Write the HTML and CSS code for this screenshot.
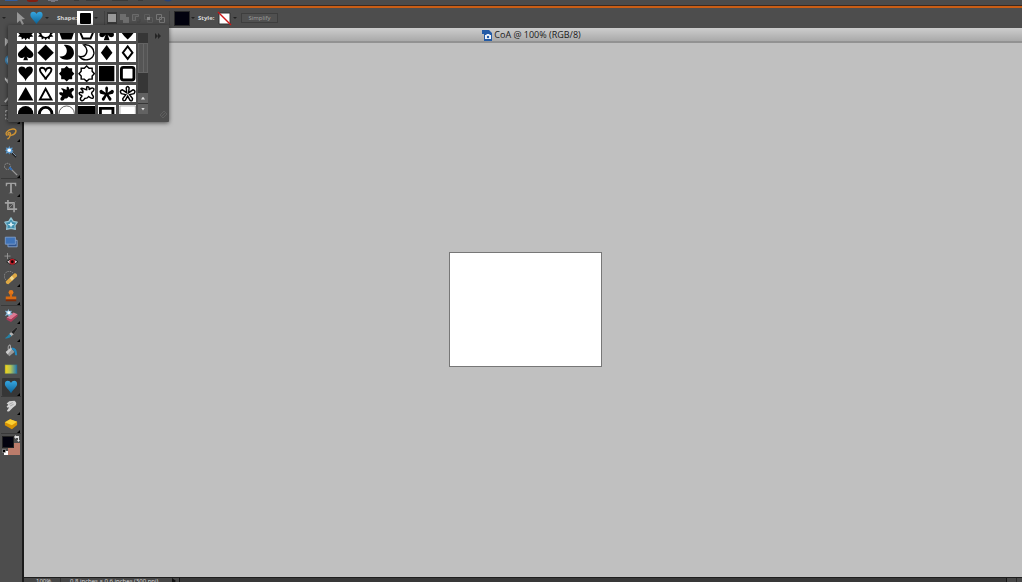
FILE: index.html
```html
<!DOCTYPE html>
<html lang="en">
<head>
<meta charset="utf-8">
<title>CoA @ 100% (RGB/8)</title>
<link rel="stylesheet" href="styles.css">
</head>
<body>
<svg class="defs" aria-hidden="true">
  <defs>
    <linearGradient id="blue" x1="0" y1="0" x2="0" y2="1"><stop offset="0" stop-color="#36a6e0"/><stop offset="1" stop-color="#0d6295"/></linearGradient>
    <linearGradient id="yb" x1="0" y1="0" x2="1" y2="0"><stop offset="0" stop-color="#f7d514"/><stop offset=".45" stop-color="#b9c552"/><stop offset="1" stop-color="#1874b8"/></linearGradient>
    <path id="heart" d="M9 16C7 12 2 9 2 5.500C2 1 7.500 1 9 4.500C10.500 1 16 1 16 5.500C16 9 11 12 9 16Z"/>
    <path id="longheart" d="M9 17C8 12 1.500 10 1.500 5C1.500 .5 7.500 .5 9 4C10.500 .5 16.500 .5 16.500 5C16.500 10 10 12 9 17Z"/>
    <path id="spade" d="M9 1C10 5 17 7 17 11C17 15 12 15.500 10 13L11.500 17H6.500L8 13C6 15.500 1 15 1 11C1 7 8 5 9 1Z"/>
    <path id="diamond" d="M9 .5L17.500 9L9 17.500L.5 9Z"/>
    <path id="moon" d="M6 1C13 0 17 5 16.500 10C15 18 5 18 1.500 13C9 14 12 6 6 1Z"/>
    <path id="burst" d="M9 1L11.500 3.300L14.700 3.300L14.700 6.500L17 9L14.700 11.500L14.700 14.700L11.500 14.700L9 17L6.500 14.700L3.300 14.700L3.300 11.500L1 9L3.300 6.500L3.300 3.300L6.500 3.300Z"/>
    <path id="splat" d="M9 2C11 1 12 3 11.500 5C14 2 18 3 16 6C13 8 14 9 16 12C16 15 14 14 11 12C10 14 9 14 7 14C5 18 1 16 3 13C5 11 4 11 2 10C0 8 2 7 5 8C6 6 4 5 3 4C4 2 7 5 9 5Z"/>
    <path id="flower" d="M8 8L7.500 3Q9 0 10.500 3L10 8L14.500 5Q18 6 15.500 9L11 10L14 14Q14 17.500 11.500 16L9 11.500L6.500 16Q3.500 17 4 14L7 10L2.500 9Q0 6 3.500 5Z"/>
    <path id="sun" d="M1 9L4 7L2 4L6 4L6 1L9 3L12 1L12 4L16 4L14 7L17 9L15 11L17 13L13.500 13.500L13 16L10.500 14.500L9 17L7.500 14.500L5 16L4.500 13.500L1 13L3 11Z"/>
  </defs>
</svg>

<div class="app">
  <div class="topstrip">
    <svg width="180" height="6" viewBox="0 0 180 6"><path d="M5 0h12l1 1H5z" fill="#315c9e"/><path d="M27 0h11v1l-2 1h-7l-2-1z" fill="#801f12"/><path d="M48 0h10v1h-3v1h-4V1h-3z" fill="#777782"/><path d="M74 0h5v1h-5zM86 0h14v1H86zM112 0h16v1h-16zM138 0h5v1h-5z" fill="#3b3b3b"/><path d="M164 0h8q-4 3-8 0z" fill="#26437b"/></svg>
  </div>

  <div class="options">
    <span class="caret"></span>
    <button class="plain pick" aria-label="Selection tool"><svg width="10" height="13" viewBox="0 0 10 13"><path d="M1 0L9 7L5.500 7.500L8 12L6 13L4 8.500L1 11Z" fill="#969696"/></svg></button>
    <button class="plain heartbtn" aria-label="Custom shape"><svg width="15" height="14" viewBox="1 1 16 16"><use href="#heart" fill="url(#blue)"/></svg></button>
    <span class="caret"></span>
    <span class="label shape-label">Shape:</span>
    <button class="swatch shape-swatch" aria-label="Shape picker"><span></span></button>
    <span class="caret boxed"></span>
    <span class="divider"></span>
    <div class="modes">
      <button class="plain mode on" aria-label="New shape"><svg width="8" height="8"><path d="M0 0h8v8H0z" fill="#999"/></svg></button>
      <button class="plain mode" aria-label="Add"><svg width="9" height="9"><path d="M0 0h6v3h3v6H3V6H0z" fill="#6e6e6e"/></svg></button>
      <button class="plain mode" aria-label="Subtract"><svg width="9" height="9"><path d="M.5.5h6v2h-3v4h-3z" fill="#565656" stroke="#6a6a6a"/><path d="M5 8h3V5" fill="none" stroke="#444"/></svg></button>
      <button class="plain mode" aria-label="Intersect"><svg width="9" height="9"><path d="M.5.5h5v5h-5zM3.500 3.500h5v5h-5z" fill="none" stroke="#5b5b5b"/><path d="M3 3h3v3H3z" fill="#888"/></svg></button>
      <button class="plain mode" aria-label="Exclude"><svg width="9" height="9"><path d="M.5.5h5v5h-5zM3.500 3.500h5v5h-5z" fill="none" stroke="#757575"/></svg></button>
    </div>
    <span class="divider"></span>
    <button class="color" aria-label="Colour"></button>
    <span class="caret boxed"></span>
    <span class="label style-label">Style:</span>
    <button class="plain nostyle" aria-label="No style"><svg width="15" height="15" viewBox="0 0 15 15"><path d="M2 2h11v11H2z" fill="#fff" stroke="#333"/><path d="M1 1L14 14" stroke="#cf1717" stroke-width="1.400"/></svg></button>
    <span class="caret boxed"></span>
    <button class="simplify">Simplify</button>
  </div>

  <div class="body">
    <nav class="tools" aria-label="Tools">
      <button class="tool" aria-label="Move"><svg viewBox="0 0 16 16"><path d="M1 3L8 8L4 9L1 13Z" fill="#aaa"/></svg></button>
      <button class="tool" aria-label="Zoom"><svg viewBox="0 0 16 16"><circle cx="7" cy="8" r="5" fill="#82b9dc" stroke="#397ba9" stroke-width="2"/></svg></button>
      <button class="tool" aria-label="Hand"><svg viewBox="0 0 16 16"><path d="M1 7L4 10L5 4H9V15H5L1 10Z" fill="#bbb"/></svg></button>
      <button class="tool" aria-label="Eyedropper"><svg viewBox="0 0 16 16"><path d="M1 15L7 8" stroke="#aaa" stroke-width="2"/></svg></button>
      <hr>
      <button class="tool more" aria-label="Marquee"><svg viewBox="0 0 16 16"><path d="M2 3h11v10H2z" fill="none" stroke="#bbb" stroke-dasharray="2"/></svg></button>
      <button class="tool more" aria-label="Lasso"><svg viewBox="0 0 16 16"><path d="M4 11C0 9 4 4 10 3.500C16 3 14 9 9 10.500C5 11.500 3 8 6 7.500C9 8 7 13 4 15" fill="none" stroke="#cf9434" stroke-width="1.600"/></svg></button>
      <button class="tool" aria-label="Magic wand"><svg viewBox="0 0 16 16"><path d="M7 8L14 15" stroke="#222" stroke-width="2.200"/><path d="M8 8L14 14" stroke="#819bb5" stroke-width="1"/><path d="M6 2L7 4.500L10 4L9 6.500L11 8L9 9L9 11L7 10L6 12L5 10L2 11L3 8L1 7L3 6L2 4L5 4.500Z" fill="#5b9dd4"/><circle cx="6" cy="7" r="2" fill="#fff"/></svg></button>
      <button class="tool more" aria-label="Quick selection"><svg viewBox="0 0 16 16"><circle cx="4" cy="5" r="3.500" fill="none" stroke="#999" stroke-dasharray="2 1"/><path d="M7 7L15 15" stroke="#999" stroke-width="1.600"/><path d="M6 6L9 9" stroke="#3470b9" stroke-width="2.200"/></svg></button>
      <hr>
      <button class="tool more" aria-label="Type"><svg viewBox="0 0 16 16"><path d="M2 2H14V6H13L12 3.500H9V13L11 14H5L7 13V3.500H4L3 6H2Z" fill="#a2a2a2"/></svg></button>
      <button class="tool" aria-label="Crop"><svg viewBox="0 0 16 16"><path d="M4.500 1V11.500H15M1 4.500H11.500V15" fill="none" stroke="#a2a2a2" stroke-width="1.900"/><path d="M5 11L13 3" stroke="#888"/></svg></button>
      <button class="tool" aria-label="Cookie cutter"><svg viewBox="0 0 16 16"><path d="M8 1L10.500 5L15 6L12.500 10L13 14L8 13L3 14L3.500 10L1 6L5.500 5Z" fill="#3f8ead" stroke="#93c2d2" stroke-width="1.500" stroke-linejoin="round"/><path d="M8 5L9.500 8L12 8L9 10L8 12L7 10L4 8L6.500 8Z" fill="#d6eef4"/></svg></button>
      <button class="tool" aria-label="Straighten"><svg viewBox="0 0 16 16"><path d="M4.500 6H15V13.500H4.500Z" fill="#2e528c" stroke="#8ba8d0"/><path d="M1.500 2.500H13V10.500H1.500Z" fill="#3f73b8" stroke="#7f9fce"/></svg></button>
      <button class="tool" aria-label="Red eye"><svg viewBox="0 0 16 16"><path d="M4 0V7M.5 3.500H7.500" stroke="#999"/><path d="M3 10Q9 4 16 10Q9 16 3 10Z" fill="#ddd" stroke="#111"/><circle cx="9.500" cy="10" r="3.300" fill="#b51c26"/><circle cx="9.500" cy="10" r="1.600" fill="#150505"/></svg></button>
      <button class="tool more" aria-label="Healing brush"><svg viewBox="0 0 16 16"><path d="M2 10A5 5 0 0 1 10 2" fill="none" stroke="#aaa" stroke-dasharray="1 1"/><path d="M2 12L12 2.500Q15 2 15 6L5 15Q2 15 2 12Z" fill="#dea945"/><path d="M6.500 8L9 5.500L11.500 8.500L9 11Z" fill="#f3d78c"/></svg></button>
      <button class="tool more" aria-label="Clone stamp"><svg viewBox="0 0 16 16"><circle cx="8" cy="4" r="2.800" fill="#e57919"/><path d="M6.800 5H9.200V8.500H14V12H2V8.500H6.800Z" fill="#d66a12"/><path d="M2 12H14V14H2Z" fill="#7b2909"/></svg></button>
      <hr>
      <button class="tool more" aria-label="Eraser"><svg viewBox="0 0 16 16"><path d="M3 11L11 5L15.500 7L8 13.500Z" fill="#dc7891"/><path d="M3 11L8 13V16L3 13.500ZM8 13L15.500 7V9.500L8 16Z" fill="#a93a58"/><path d="M5 1L6 3.500L9 3L8 5.500L10 7L7.500 8L6 10L4.500 8L1 9L3 6L1 3L4 3.500Z" fill="#8cbcdc"/><circle cx="5.500" cy="5.500" r="1.700" fill="#fff"/></svg></button>
      <button class="tool more" aria-label="Brush"><svg viewBox="0 0 16 16"><path d="M8 7L14 1.500L15.500 3L11 9.500Z" fill="#222" stroke="#777" stroke-width=".5"/><path d="M6 9L8 7L11 9.500L8 12Z" fill="#b5b5b5"/><path d="M6 9L8.500 11.500Q6 15 1 14Q4 12 6 9Z" fill="#2682a6"/></svg></button>
      <button class="tool" aria-label="Paint bucket"><svg viewBox="0 0 16 16"><path d="M2 9L8 4L12 9L6 14Z" fill="#999"/><path d="M2 9L8 4L9 6L4 12Z" fill="#ccc"/><path d="M5 7Q4 1 7 1L8 7" fill="none" stroke="#bbb"/><path d="M9 4Q15 4 15 12Q14 14 12.500 12Q13 8 9 6Z" fill="#2388be"/></svg></button>
      <button class="tool" aria-label="Gradient"><svg viewBox="0 0 16 16"><path d="M1 3H15V13.500H1Z" fill="url(#yb)" stroke="#44605d" stroke-width=".6"/></svg></button>
      <button class="tool more active" aria-label="Custom shape"><svg viewBox="1 1 16 16"><use href="#heart" fill="url(#blue)"/></svg></button>
      <hr>
      <button class="tool more" aria-label="Smudge"><svg viewBox="0 0 16 16"><path d="M3 5L6 2.500L12 2Q15 4 13.500 7L10 10L6 14Q3 15 3.500 13L6 9.500L4 10L3 8.500L5 6.500Z" fill="#d4d4d4"/><path d="M6 6L10 4M7 8L11 6" stroke="#888" stroke-width=".7"/></svg></button>
      <button class="tool more" aria-label="Sponge"><svg viewBox="0 0 16 16"><path d="M1 6L7 2.500L15 5.500V9L9 14L1 9.500Z" fill="#d89405"/><path d="M1 6L7 2.500L15 5.500L9 9.500Z" fill="#fbd034"/></svg></button>
      <hr>
      <div class="colors">
        <button class="bg" aria-label="Background colour"></button>
        <button class="fg" aria-label="Foreground colour"></button>
        <svg class="swap" width="6" height="7" viewBox="0 0 6 7"><path d="M0 2L2 0V1H5V5H6L4.500 7L3 5H4V3H2V4Z" fill="#ddd"/></svg>
        <svg class="reset" width="6" height="6" viewBox="0 0 6 6"><path d="M2 2h4v4H2z" fill="#fff"/><path d="M.5.5h3v3h-3z" fill="#000" stroke="#bbb" stroke-width=".5"/></svg>
      </div>
    </nav>

    <main class="document">
      <header class="titlebar">
        <svg width="10" height="11" viewBox="0 0 10 11"><path d="M0 0H7L10 3V11H2V4H0Z" fill="#245ba6"/><path d="M3 5H4L5 4H7L8 5H9V9H3Z" fill="#eef4fb"/><circle cx="6" cy="7" r="1.200" fill="#245ba6"/></svg>
        <span>CoA @ 100% (RGB/8)</span>
      </header>
      <div class="workspace"><div class="paper"></div></div>
      <footer class="status">
        <span class="zoom">100%</span>
        <span class="dims">0.8 inches × 0.6 inches (300 ppi)</span>
        <span class="next"></span>
        <span class="track"></span>
        <span class="end"></span>
      </footer>
    </main>

    <section class="picker" aria-label="Shapes">
      <div class="shapes">
        <div class="grid">
          <button><svg viewBox="0 0 18 18"><use href="#sun"/></svg></button>
          <button><svg viewBox="0 0 18 18"><use href="#sun"/><circle cx="9" cy="9" r="4.500" fill="#fff"/></svg></button>
          <button><svg viewBox="0 0 18 18"><path d="M9 1L17 8L14 16H4L1 8Z"/></svg></button>
          <button><svg viewBox="0 0 18 18"><path class="line" d="M9 2L16 8L13 15H5L2 8Z"/></svg></button>
          <button><svg viewBox="0 0 18 18"><path d="M8 11Q6 15 2 13Q0 9 5 7Q5 1 9 1Q13 1 13 7Q18 9 16 13Q12 15 10 11L12 17H6Z"/></svg></button>
          <button><svg viewBox="0 0 18 18"><path d="M1 5Q5 0 9 4Q13 0 17 5Q16 10 9 16Q2 10 1 5Z"/></svg></button>

          <button><svg viewBox="0 0 18 18"><use href="#spade"/></svg></button>
          <button><svg viewBox="0 0 18 18"><use href="#diamond"/></svg></button>
          <button><svg viewBox="0 0 18 18"><use href="#moon"/></svg></button>
          <button><svg viewBox="0 0 18 18"><use class="thin" href="#moon"/></svg></button>
          <button><svg viewBox="0 0 18 18"><path d="M9 1L15 9L9 17L3 9Z"/></svg></button>
          <button><svg viewBox="0 0 18 18"><path class="line" d="M9 2.500L14 9L9 15.500L4 9Z"/></svg></button>

          <button><svg viewBox="0 0 18 18"><use href="#longheart"/></svg></button>
          <button><svg viewBox="0 0 18 18"><path class="line" d="M9 15C8 11 3 9 3 5C3 2 7.500 2 9 5.500C10.500 2 15 2 15 5C15 9 10 11 9 15Z"/></svg></button>
          <button><svg viewBox="0 0 18 18"><use href="#burst"/></svg></button>
          <button><svg viewBox="0 0 18 18"><use class="thin" href="#burst"/></svg></button>
          <button><svg viewBox="0 0 18 18"><path d="M1 1H17V17H1Z"/></svg></button>
          <button><svg viewBox="0 0 18 18"><rect x="2.500" y="2.500" width="13" height="13" rx="2" fill="none" stroke="#000" stroke-width="3"/></svg></button>

          <button><svg viewBox="0 0 18 18"><path d="M9 2L17 16H1Z"/></svg></button>
          <button><svg viewBox="0 0 18 18"><path class="line" d="M9 4L15 15H3Z"/></svg></button>
          <button><svg viewBox="0 0 18 18"><use href="#splat"/></svg></button>
          <button><svg viewBox="0 0 18 18"><use class="thin" href="#splat"/></svg></button>
          <button><svg viewBox="0 0 18 18"><use href="#flower"/></svg></button>
          <button><svg viewBox="0 0 18 18"><use class="thin" href="#flower"/></svg></button>

          <button><svg viewBox="0 0 18 18"><circle cx="9" cy="9" r="8"/></svg></button>
          <button><svg viewBox="0 0 18 18"><circle cx="9" cy="9" r="6.500" fill="none" stroke="#000" stroke-width="3"/></svg></button>
          <button><svg viewBox="0 0 18 18"><circle cx="9" cy="9" r="8" fill="none" stroke="#333" stroke-width=".8"/></svg></button>
          <button><svg viewBox="0 0 18 18"><path d="M0 1H18V17H0Z"/></svg></button>
          <button><svg viewBox="0 0 18 18"><path d="M2.500 3.500H15.500V15H2.500Z" fill="none" stroke="#000" stroke-width="3"/></svg></button>
          <button><svg viewBox="0 0 18 18"><path d="M1 1H17V17H1Z" fill="none" stroke="#777" stroke-width=".6"/></svg></button>
        </div>
      </div>
      <div class="scroll">
        <span class="thumb"></span>
        <button class="up" aria-label="Scroll up"></button>
        <button class="down" aria-label="Scroll down"></button>
      </div>
      <div class="side">
        <svg width="6" height="6" viewBox="0 0 6 6"><path d="M0 0L3 3L0 6ZM3 0L6 3L3 6Z" fill="#252525"/></svg>
        <svg width="7" height="7" viewBox="0 0 7 7"><path d="M0 4L4 0L7 3L3 7ZM2 5L5 2" fill="none" stroke="#666" stroke-width=".7"/></svg>
      </div>
    </section>
  </div>
</div>
</body>
</html>
```
FILE: styles.css
```css
* { box-sizing: border-box; }
body { margin: 0; font-family: "Open Sans", "Noto Sans", sans-serif; background: #4d4d4d; }
button { padding: 0; margin: 0; border: 0; background: none; font: inherit; color: inherit; }
svg { display: block; flex: none; }
.defs { position: absolute; width: 0; height: 0; }
.app { display: flex; flex-direction: column; height: 100vh; overflow: hidden; }

.topstrip { flex: none; height: 6px; background: #4b4b4b; }
.options {
  flex: none; display: flex; align-items: center; height: 22px;
  padding-left: 2px; border-top: 2px solid #c95d14; background: #4d4d4d;
  box-shadow: 0 -1px #3a2a20;
}
.caret { flex: none; width: 4px; height: 2px; background: #222; clip-path: polygon(0 0, 100% 0, 50% 100%); }
.caret.boxed { margin: 0 2px 0 1px; }
.plain { display: grid; place-items: center; flex: none; }
.pick { margin-left: 10px; }
.heartbtn { margin: 0 1px 0 3px; }
.label { font-size: 6px; line-height: 8px; font-weight: 700; color: #d6d6d6; white-space: nowrap; }
.shape-label { width: 18px; margin: 0 2px 0 8px; }
.swatch { display: grid; place-items: center; width: 16px; height: 14px; background: #fff; }
.swatch span { width: 11px; height: 11px; border-radius: 1px; background: #000; }
.divider { flex: none; width: 1px; height: 14px; margin: 0 2px 0 4px; background: #414141; }
.modes { display: flex; gap: 2px; }
.mode { width: 10px; height: 12px; }
.mode.on { background: #383838; }
.color { width: 16px; height: 15px; margin-left: 2px; background: #02020e; border: 1px solid #292929; }
.style-label { width: 16px; margin: 0 3px 0 1px; }
.simplify {
  width: 37px; height: 10px; margin-left: 2px; border: 1px solid #3e3e3e;
  font-size: 6px; line-height: 8px; color: #a0a0a0; background: #505050;
}

.body { position: relative; flex: 1; min-height: 0; display: flex; }
.tools {
  flex: none; width: 24px; padding-top: 5px; overflow: hidden;
  background: #4d4d4d; border-right: 2px solid #1b1b1b;
}
.tools hr { height: 1px; margin: 0 1px; border: 0; background: #393939; }
.tool { position: relative; display: grid; place-items: center; width: 18px; height: 18px; margin-left: 2px; }
.tool svg { width: 14px; height: 14px; }
.tool.active { background: #363636; border-radius: 1px; }
.tool.more::after {
  content: ""; position: absolute; right: 0; bottom: 0; width: 3px; height: 3px;
  background: #000; clip-path: polygon(100% 0, 100% 100%, 0 100%);
}
.colors { position: relative; width: 20px; height: 22px; }
.fg, .bg { position: absolute; width: 12px; height: 12px; }
.fg { left: 2px; top: 2px; background: #02020e; border: 1px solid #222; }
.bg { right: 0; top: 9px; background: #bb7c6b; }
.swap { position: absolute; right: 0; top: 1px; }
.reset { position: absolute; left: 2px; bottom: 1px; }

.document { flex: 1; min-width: 0; display: flex; flex-direction: column; }
.titlebar {
  flex: none; display: flex; align-items: center; justify-content: center; gap: 2px;
  height: 15px; padding: 1px 0 0 17px; font-size: 9px; line-height: 12px; color: #1a1a1a;
  background: linear-gradient(#cdcdcd, #a9a9a9); border-bottom: 2px solid #929292;
}
.workspace { flex: 1; min-height: 0; display: grid; place-items: center; padding: 0 0 2px 5px; background: #c0c0c0; }
.paper { width: 153px; height: 115px; background: #fff; border: 1px solid #777; }
.status {
  flex: none; display: flex; height: 5px; overflow: hidden; background: #464646;
  border-top: 1px solid #1d1d1d; font-size: 6px; line-height: 6px; color: #ddd; white-space: nowrap;
}
.zoom { width: 37px; padding-left: 12px; border-right: 1px solid #303030; }
.dims { width: 109px; padding-left: 9px; }
.next { width: 8px; height: 6px; margin-right: 1px; background: #111; clip-path: polygon(25% 0, 75% 50%, 25% 100%); }
.track { flex: 1; background: #383838; border-left: 1px solid #151515; border-right: 1px solid #151515; }
.end { width: 15px; background: linear-gradient(90deg, #484848 9px, #2a2a2a 9px, #2a2a2a 10px, #484848 10px); }

.picker {
  position: absolute; left: 8px; top: -3px; display: flex; padding: 8px 2px 8px 9px;
  background: #4d4d4d; border-radius: 1px; box-shadow: 0 1px 4px #0009;
}
.shapes { width: 119px; height: 81px; overflow: hidden; }
.grid { display: grid; grid-template-columns: repeat(6, 1fr); gap: 3px; margin-top: -9px; }
.grid button { aspect-ratio: 1; background: #fff; overflow: hidden; }
.grid svg { width: 100%; height: 100%; }
.line { fill: none; stroke: #000; stroke-width: 2px; }
.thin { fill: none; stroke: #000; stroke-width: 1.5px; }
.scroll { display: flex; flex-direction: column; gap: 1px; width: 10px; margin-left: 2px; padding-top: 10px; background: #363636; }
.thumb { height: 30px; margin-bottom: auto; background: linear-gradient(90deg, #555 4px, #666 4px, #666 5px, #555 5px); border: 1px solid #636363; }
.up, .down { display: grid; place-items: center; height: 10px; background: #626262; }
.up::after, .down::after { content: ""; width: 4px; height: 3px; background: #ddd; clip-path: polygon(50% 0, 100% 100%, 0 100%); }
.down::after { clip-path: polygon(0 0, 100% 0, 50% 100%); }
.side { display: flex; flex-direction: column; justify-content: space-between; align-items: flex-end; width: 19px; margin-bottom: -4px; }
.side svg:first-child { margin-right: 6px; }
```
